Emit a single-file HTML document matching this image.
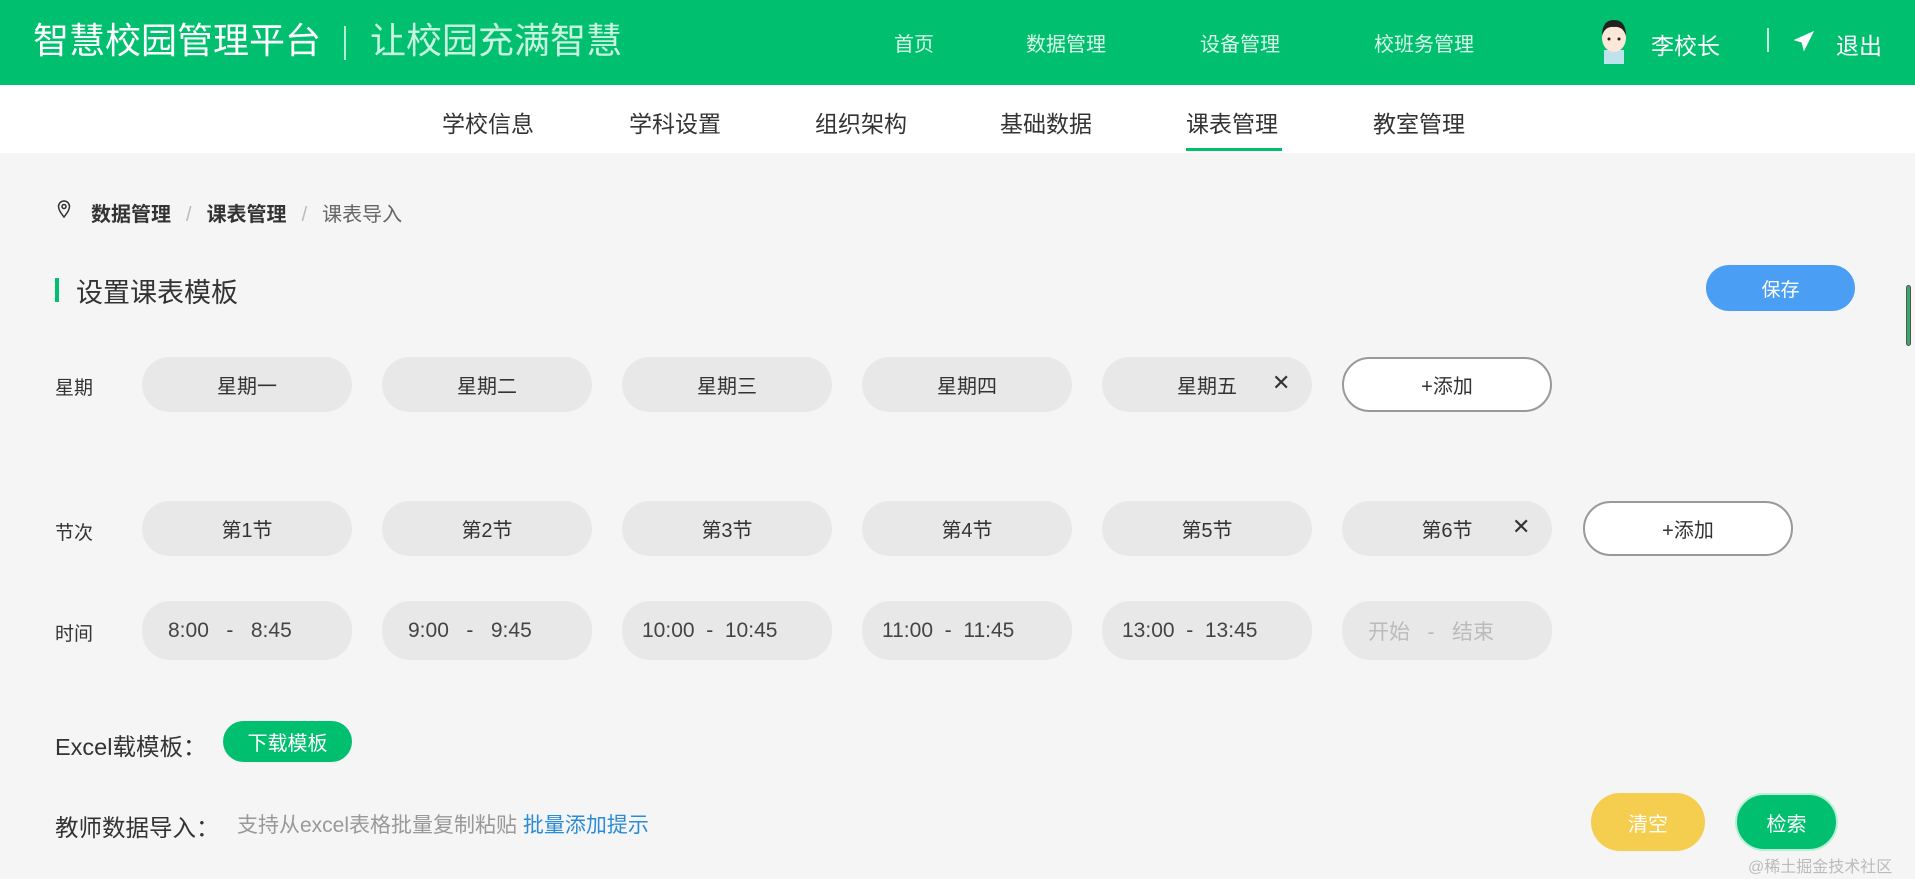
<!DOCTYPE html>
<html><head><meta charset="utf-8"><style>
*{margin:0;padding:0;box-sizing:border-box}
body{width:1915px;height:879px;overflow:hidden;background:#f5f5f5;font-family:"Liberation Sans","Noto Sans CJK SC",sans-serif;color:#333;position:relative}
.a{position:absolute;white-space:nowrap}
.c{display:flex;align-items:center;justify-content:center}
.hd{position:absolute;left:0;top:0;width:1915px;height:85px;background:#00bf6f;color:#fff}
.sub{position:absolute;left:0;top:85px;width:1915px;height:68px;background:#fff}
.pill{position:absolute;width:210px;height:55px;border-radius:28px;background:#e8e8e8;font-size:20px;display:flex;align-items:center;justify-content:center;color:#333}
.add{background:#fff;border:2px solid #999}
.tm{height:59px;justify-content:flex-start;padding-left:26px;font-size:21px;color:#444}
.lbl{font-size:19px;color:#333}
</style></head><body>
<div class="hd">
 <div class="a" style="left:33px;top:18px;font-size:36px;line-height:46px">智慧校园管理平台</div>
 <div class="a" style="left:344px;top:26px;width:2px;height:34px;background:rgba(255,255,255,.7)"></div>
 <div class="a" style="left:370px;top:18px;font-size:36px;line-height:46px;color:#c8f3de">让校园充满智慧</div>
 <div class="a" style="left:894px;top:28px;font-size:20px;color:#d8f7e8">首页</div>
 <div class="a" style="left:1026px;top:28px;font-size:20px;color:#d8f7e8">数据管理</div>
 <div class="a" style="left:1200px;top:28px;font-size:20px;color:#d8f7e8">设备管理</div>
 <div class="a" style="left:1374px;top:28px;font-size:20px;color:#d8f7e8">校班务管理</div>
 <svg class="a" style="left:1597px;top:16px" width="34" height="48" viewBox="0 0 34 48"><rect x="7" y="34" width="20" height="14" fill="#bfe3ee"/><ellipse cx="17" cy="22" rx="12" ry="14" fill="#fde8d8"/><path d="M5 20 Q5 4 17 4 Q29 4 29 20 Q26 10 17 11 Q8 10 5 20Z" fill="#222"/><circle cx="12" cy="23" r="1.5" fill="#222"/><circle cx="22" cy="23" r="1.5" fill="#222"/></svg>
 <div class="a" style="left:1651px;top:27px;font-size:23px">李校长</div>
 <div class="a" style="left:1767px;top:28px;width:2px;height:24px;background:rgba(255,255,255,.8)"></div>
 <svg class="a" style="left:1794px;top:31px" width="20" height="20" viewBox="0 0 20 20"><path d="M19 1 L1 9 L8 11 L10 19 Z M8 11 L19 1" fill="#fff" stroke="#fff" stroke-width="1"/></svg>
 <div class="a" style="left:1836px;top:27px;font-size:23px">退出</div>
</div>
<div class="sub">
 <div class="a" style="left:442px;top:20px;font-size:23px">学校信息</div>
 <div class="a" style="left:629px;top:20px;font-size:23px">学科设置</div>
 <div class="a" style="left:815px;top:20px;font-size:23px">组织架构</div>
 <div class="a" style="left:1000px;top:20px;font-size:23px">基础数据</div>
 <div class="a" style="left:1186px;top:20px;font-size:23px">课表管理</div>
 <div class="a" style="left:1186px;top:63px;width:96px;height:3px;background:#00bf6f"></div>
 <div class="a" style="left:1373px;top:20px;font-size:23px">教室管理</div>
</div>
<svg class="a" style="left:57px;top:200px" width="14" height="18" viewBox="0 0 14 18"><path d="M7 17 C2 11 1.5 8 1.5 6.5 A5.5 5.5 0 0 1 12.5 6.5 C12.5 8 12 11 7 17Z" fill="none" stroke="#333" stroke-width="1.5"/><circle cx="7" cy="6.5" r="2" fill="none" stroke="#333" stroke-width="1.5"/></svg>
<div class="a" style="left:91px;top:198px;font-size:20px;font-weight:bold">数据管理<span style="color:#bbb;font-weight:normal;margin:0 15px">/</span>课表管理<span style="color:#bbb;font-weight:normal;margin:0 15px">/</span><span style="font-weight:normal;color:#666">课表导入</span></div>
<div class="a" style="left:55px;top:278px;width:4px;height:24px;background:#00bf6f"></div>
<div class="a" style="left:76px;top:271px;font-size:27px;color:#333">设置课表模板</div>
<div class="a c" style="left:1706px;top:265px;width:149px;height:46px;border-radius:23px;background:#4a9ff5;color:#fff;font-size:19px">保存</div>
<div class="a" style="left:1906px;top:285px;width:5px;height:61px;border-radius:3px;background:#3aa868;border:1px solid #555"></div>

<div class="a lbl" style="left:55px;top:373px">星期</div>
<div class="pill" style="left:142px;top:357px">星期一</div>
<div class="pill" style="left:382px;top:357px">星期二</div>
<div class="pill" style="left:622px;top:357px">星期三</div>
<div class="pill" style="left:862px;top:357px">星期四</div>
<div class="pill" style="left:1102px;top:357px">星期五<span class="a" style="left:170px;top:13px;font-size:22px">✕</span></div>
<div class="pill add" style="left:1342px;top:357px">+添加</div>

<div class="a lbl" style="left:55px;top:518px">节次</div>
<div class="pill" style="left:142px;top:501px">第1节</div>
<div class="pill" style="left:382px;top:501px">第2节</div>
<div class="pill" style="left:622px;top:501px">第3节</div>
<div class="pill" style="left:862px;top:501px">第4节</div>
<div class="pill" style="left:1102px;top:501px">第5节</div>
<div class="pill" style="left:1342px;top:501px">第6节<span class="a" style="left:170px;top:13px;font-size:22px">✕</span></div>
<div class="pill add" style="left:1583px;top:501px">+添加</div>

<div class="a lbl" style="left:55px;top:619px">时间</div>
<div class="pill tm" style="left:142px;top:601px">8:00 &nbsp; - &nbsp; 8:45</div>
<div class="pill tm" style="left:382px;top:601px">9:00 &nbsp; - &nbsp; 9:45</div>
<div class="pill tm" style="left:622px;top:601px;padding-left:20px">10:00 &nbsp;- &nbsp;10:45</div>
<div class="pill tm" style="left:862px;top:601px;padding-left:20px">11:00 &nbsp;- &nbsp;11:45</div>
<div class="pill tm" style="left:1102px;top:601px;padding-left:20px">13:00 &nbsp;- &nbsp;13:45</div>
<div class="pill tm" style="left:1342px;top:601px;color:#bbb">开始 &nbsp; - &nbsp; 结束</div>

<div class="a" style="left:55px;top:728px;font-size:23.5px;color:#333">Excel载模板：</div>
<div class="a c" style="left:223px;top:721px;width:129px;height:41px;border-radius:21px;background:#00bf6f;color:#fff;font-size:20px">下载模板</div>

<div class="a" style="left:55px;top:809px;font-size:23.5px;color:#333">教师数据导入：</div>
<div class="a" style="left:237px;top:809px;font-size:21px;color:#999">支持从excel表格批量复制粘贴 <span style="color:#2a8bd6">批量添加提示</span></div>
<div class="a c" style="left:1591px;top:793px;width:114px;height:58px;border-radius:29px;background:#f5cd4f;color:#fff;font-size:20px">清空</div>
<div class="a c" style="left:1735px;top:793px;width:103px;height:58px;border-radius:29px;background:#00bf6f;border:2px solid #b8efd6;color:#fff;font-size:20px">检索</div>
<div class="a" style="left:1748px;top:853px;font-size:16px;color:#bbb">@稀土掘金技术社区</div>
</body></html>
